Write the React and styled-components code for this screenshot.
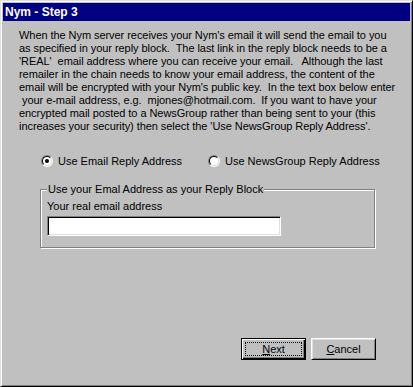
import React from "react";
import styled, { createGlobalStyle } from "styled-components";

const Global = createGlobalStyle`
  html, body { margin: 0; padding: 0; background: #c0c0c0; }
  body { font-family: "Liberation Sans", Arial, sans-serif; font-size: 11px; color: #000; }
`;

const Window = styled.div`
  box-sizing: border-box;
  width: 413px;
  height: 387px;
  background: #c0c0c0;
  border: 1px solid;
  border-color: #dfdfdf #000 #000 #dfdfdf;
  box-shadow: inset 1px 1px 0 #fff, inset -1px -1px 0 #808080;
  padding: 2px;
  display: flex;
  flex-direction: column;
`;

const TitleBar = styled.div`
  height: 18px;
  background: #000080;
  color: #fff;
  font-weight: bold;
  font-size: 12px;
  line-height: 18px;
  padding-left: 2px;
`;

const Body = styled.div`
  flex: 1;
  display: flex;
  flex-direction: column;
`;

const Intro = styled.p`
  margin: 8px 0 0 16px;
  white-space: pre;
  line-height: 13px;
  font-size: 11px;
  letter-spacing: -0.06px;
`;

const RadioRow = styled.div`
  display: flex;
  align-items: center;
  height: 14px;
  margin: 21px 0 0 38px;
`;

const RadioLabel = styled.label`
  display: flex;
  align-items: center;
  gap: 5px;
  width: ${(p) => p.$w}px;
`;

const RadioCircle = styled.span`
  box-sizing: border-box;
  width: 12px;
  height: 12px;
  border-radius: 50%;
  border: 1px solid;
  border-color: #808080 #fff #fff #808080;
  display: flex;
  flex: none;
`;

const RadioInner = styled.span`
  box-sizing: border-box;
  flex: 1;
  border-radius: 50%;
  border: 1px solid;
  border-color: #000 #dfdfdf #dfdfdf #000;
  background: #fff;
  display: flex;
  align-items: center;
  justify-content: center;
`;

const RadioDot = styled.span`
  width: 4px;
  height: 4px;
  border-radius: 50%;
  background: #000;
`;

const Group = styled.div`
  position: relative;
  box-sizing: border-box;
  width: 335px;
  height: 59px;
  margin: 21px 0 0 37px;
  border: 1px solid #808080;
  box-shadow: 1px 1px 0 #fff, inset 1px 1px 0 #fff;
  padding: 10px 0 0 7px;
`;

const GroupTitle = styled.span`
  position: absolute;
  top: -7px;
  left: 6px;
  padding: 0 1px;
  background: #c0c0c0;
  line-height: 13px;
`;

const FieldLabel = styled.div`
  line-height: 13px;
  margin-left: -1px;
`;

const TextBox = styled.input`
  box-sizing: border-box;
  display: block;
  width: 234px;
  height: 20px;
  margin: 3px 0 0 -1px;
  background: #fff;
  border: 1px solid;
  border-color: #808080 #fff #fff #808080;
  box-shadow: inset 1px 1px 0 #000, inset -1px -1px 0 #dfdfdf;
  outline: none;
  padding: 0 3px;
  font: inherit;
`;

const ButtonRow = styled.div`
  margin-top: auto;
  display: flex;
  justify-content: flex-end;
  gap: 5px;
  padding: 0 34px 24px 0;
`;

const Button = styled.button`
  box-sizing: border-box;
  width: 65px;
  height: 22px;
  padding: 0;
  background: #c0c0c0;
  font: inherit;
  font-size: 11px;
  color: #000;
  border: 1px solid;
  border-color: ${(p) => (p.$default ? "#000" : "#fff #000 #000 #fff")};
  box-shadow: ${(p) =>
    p.$default
      ? "inset 1px 1px 0 #fff, inset -1px -1px 0 #000, inset -2px -2px 0 #808080"
      : "inset 1px 1px 0 #dfdfdf, inset -1px -1px 0 #808080"};
  display: flex;
  align-items: center;
  justify-content: center;
  position: relative;
`;

const FocusRing = styled.span`
  position: absolute;
  left: 3px;
  top: 3px;
  right: 3px;
  bottom: 3px;
  border: 1px dotted #000;
`;

function Radio({ checked, label, width }) {
  return (
    <RadioLabel $w={width}>
      <RadioCircle>
        <RadioInner>{checked && <RadioDot />}</RadioInner>
      </RadioCircle>
      <span>{label}</span>
    </RadioLabel>
  );
}

const text = [
  "When the Nym server receives your Nym's email it will send the email to you",
  "as specified in your reply block.  The last link in the reply block needs to be a",
  "'REAL'  email address where you can receive your email.   Although the last",
  "remailer in the chain needs to know your email address, the content of the",
  "email will be encrypted with your Nym's public key.  In the text box below enter",
  " your e-mail address, e.g.  mjones@hotmail.com.  If you want to have your",
  "encrypted mail posted to a NewsGroup rather than being sent to your (this",
  "increases your security) then select the 'Use NewsGroup Reply Address'.",
].join("\n");

export default function App() {
  return (
    <>
      <Global />
      <Window>
        <TitleBar>Nym - Step 3</TitleBar>
        <Body>
          <Intro>{text}</Intro>
          <RadioRow>
            <Radio checked label="Use Email Reply Address" width={167} />
            <Radio label="Use NewsGroup Reply Address" width={180} />
          </RadioRow>
          <Group>
            <GroupTitle>Use your Emal Address as your Reply Block</GroupTitle>
            <FieldLabel>Your real email address</FieldLabel>
            <TextBox type="text" />
          </Group>
          <ButtonRow>
            <Button $default>
              <FocusRing />
              <span>
                <u>N</u>ext
              </span>
            </Button>
            <Button>
              <span>
                <u>C</u>ancel
              </span>
            </Button>
          </ButtonRow>
        </Body>
      </Window>
    </>
  );
}
